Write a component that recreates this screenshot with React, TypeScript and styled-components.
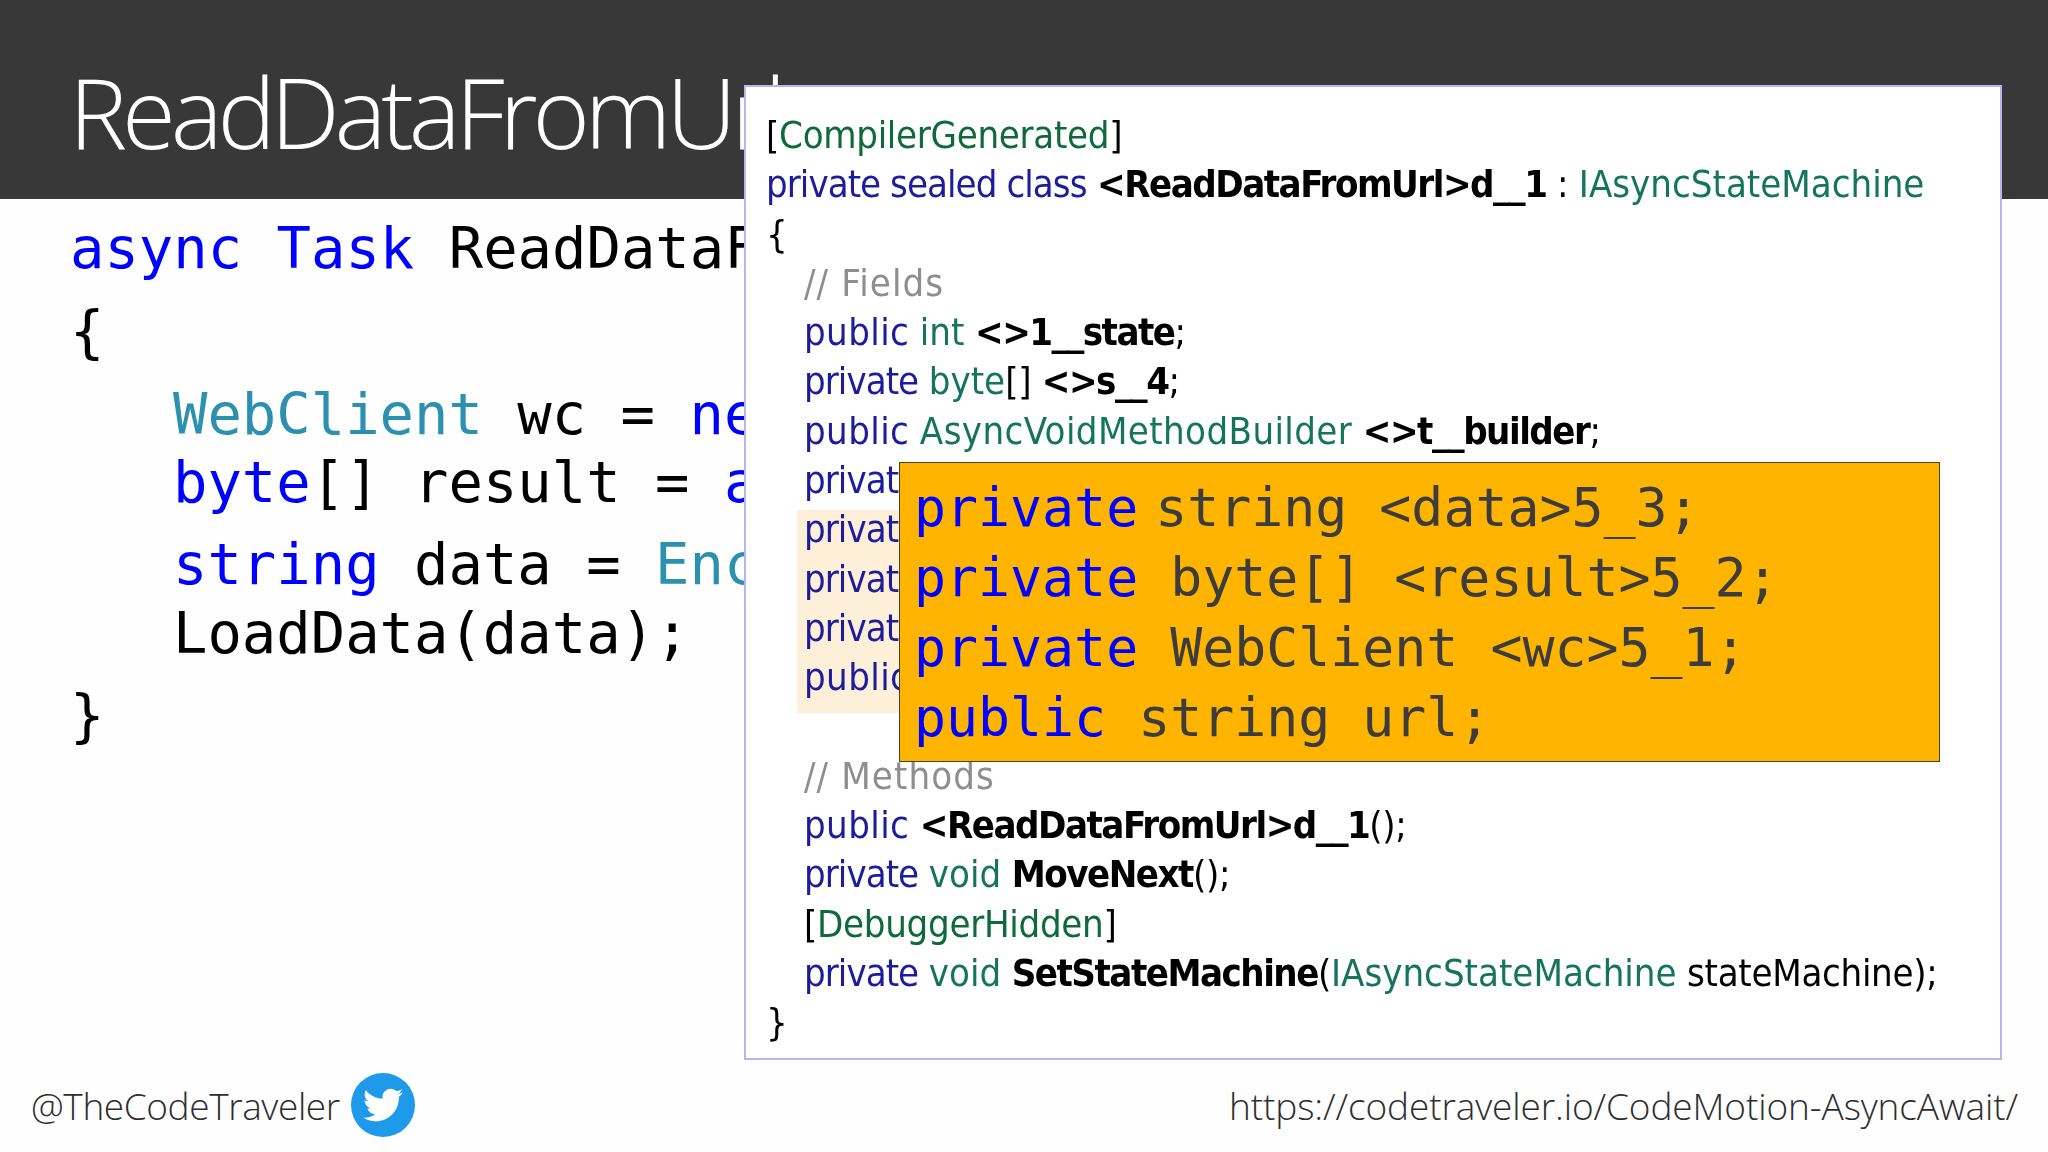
import React from "react";
import styled, { createGlobalStyle } from "styled-components";
import { FaTwitter } from "react-icons/fa";

const Global = createGlobalStyle`
  html, body { margin: 0; padding: 0; background: #fefefe; }
  #root { width: 2048px; height: 1152px; overflow: hidden; }
`;

const Page = styled.div`
  position: relative;
  width: 2048px;
  height: 1152px;
  display: grid;
  grid-template-rows: 199px 1fr 94px;
  background: #fefefe;
  overflow: hidden;
`;
const Header = styled.header`
  background: #383838;
  padding: 51px 0 0 69px;
  box-sizing: border-box;
`;
const Title = styled.h1`
  margin: 0;
  font: 300 98px/120px "Open Sans", sans-serif;
  letter-spacing: -5.2px;
  color: #fff;
`;
const CodeArea = styled.main`
  padding-top: 15px;
  font: 400 57.2px/68px "DejaVu Sans Mono", monospace;
  color: #000;
`;
const CodeLine = styled.div<{ $indent?: boolean; $gap: number }>`
  margin-top: ${(p) => p.$gap}px;
  padding-left: ${(p) => (p.$indent ? 173 : 70)}px;
  white-space: pre;
`;
const Kw = styled.span`color: #0000ff;`;
const Ty = styled.span`color: #2b91af;`;
const Footer = styled.footer`
  display: flex;
  align-items: center;
  justify-content: space-between;
  padding: 2px 30px 0 31px;
  font: 300 37px/50px "Open Sans", sans-serif;
  color: #2e2e2e;
`;
const Handle = styled.div`
  display: flex;
  align-items: center;
  gap: 11px;
  letter-spacing: -0.4px;
`;
const Badge = styled.span`
  width: 64px;
  height: 64px;
  margin-top: -2px;
  border-radius: 50%;
  background: #1f9aea;
  display: flex;
  align-items: center;
  justify-content: center;
  color: #fff;
  font-size: 40px;
`;
const Link = styled.div`
  letter-spacing: -0.12px;
`;
const Panel = styled.section`
  position: absolute;
  left: 744px;
  top: 85px;
  width: 1258px;
  height: 975px;
  box-sizing: border-box;
  padding: 24px 0 0 20px;
  background: #fff;
  border: 2px solid #b9b5ee;
`;
const Listing = styled.div`
  font: 400 38px/49.3px "DejaVu Sans", sans-serif;
  font-stretch: condensed;
  letter-spacing: -0.3px;
  color: #000;
  filter: blur(0.6px);
`;
const Row = styled.div<{ $indent?: boolean }>`
  height: 49.3px;
  padding-left: ${(p) => (p.$indent ? 38 : 0)}px;
  white-space: pre;
`;
const Key = styled.span<{ $wide?: boolean }>`
  color: #1c1c9c;
  letter-spacing: ${(p) => (p.$wide ? 0.4 : -0.95)}px;
`;
const Type = styled.span<{ $wide?: boolean }>`
  color: #15745c;
  letter-spacing: ${(p) => (p.$wide ? 0.4 : 0)}px;
`;
const Attr = styled.span`color: #0e6a3a; letter-spacing: -0.3px;`;
const Comment = styled.span`color: #8e8e8e; letter-spacing: 1.1px;`;
const Name = styled.span`font-weight: 700; letter-spacing: -1.5px;`;
const Highlight = styled.div`
  display: flow-root;
  margin: 5px 0 -10px 31px;
  padding: 0 0 10px 7px;
  background: #fdefd8;
  width: 1000px;
`;
const HighlightRows = styled.div`
  margin-top: -5px;
`;
const Callout = styled.div`
  position: absolute;
  left: 153px;
  top: 375px;
  width: 1041px;
  height: 300px;
  box-sizing: border-box;
  padding: 10px 0 0 14px;
  background: #ffb400;
  border: 1px solid #4a4320;
  font: 400 53.2px/70px "DejaVu Sans Mono", monospace;
  color: #3c3c3c;
`;
const CalloutLine = styled.div`
  white-space: pre;
`;
const TightGap = styled.span`
  word-spacing: -15px;
`;
const Blue = styled.span`color: #0000ff;`;

export default function App() {
  return (
    <Page>
      <Global />
      <Header>
        <Title>ReadDataFromUrl</Title>
      </Header>
      <CodeArea>
        <CodeLine $gap={0}><Kw>async Task</Kw> ReadDataFromUrl(<Kw>string</Kw> url)</CodeLine>
        <CodeLine $gap={15}>{"{"}</CodeLine>
        <CodeLine $gap={15} $indent><Ty>WebClient</Ty> wc = <Kw>new</Kw> <Ty>WebClient</Ty>();</CodeLine>
        <CodeLine $gap={0} $indent><Kw>byte</Kw>[] result = <Kw>await</Kw> wc.DownloadDataTaskAsync(url);</CodeLine>
        <CodeLine $gap={14} $indent><Kw>string</Kw> data = <Ty>Encoding</Ty>.ASCII.GetString(result);</CodeLine>
        <CodeLine $gap={1} $indent>LoadData(data);</CodeLine>
        <CodeLine $gap={14}>{"}"}</CodeLine>
      </CodeArea>
      <Footer>
        <Handle>
          @TheCodeTraveler
          <Badge><FaTwitter /></Badge>
        </Handle>
        <Link>https://codetraveler.io/CodeMotion-AsyncAwait/</Link>
      </Footer>
      <Panel>
        <Listing>
          <Row>[<Attr>CompilerGenerated</Attr>]</Row>
          <Row><Key>private sealed class</Key> <Name>&lt;ReadDataFromUrl&gt;d__1</Name> : <Type>IAsyncStateMachine</Type></Row>
          <Row>{"{"}</Row>
          <Row $indent><Comment>// Fields</Comment></Row>
          <Row $indent><Key $wide>public</Key> <Type>int</Type> <Name>&lt;&gt;1__state</Name>;</Row>
          <Row $indent><Key>private</Key> <Type>byte</Type>[] <Name>&lt;&gt;s__4</Name>;</Row>
          <Row $indent><Key $wide>public</Key> <Type $wide>AsyncVoidMethodBuilder</Type> <Name>&lt;&gt;t__builder</Name>;</Row>
          <Row $indent><Key>private</Key></Row>
          <Highlight>
            <HighlightRows>
              <Row><Key>private</Key></Row>
              <Row><Key>private</Key></Row>
              <Row><Key>private</Key></Row>
              <Row><Key $wide>public</Key></Row>
            </HighlightRows>
          </Highlight>
          <Row />
          <Row $indent><Comment>// Methods</Comment></Row>
          <Row $indent><Key $wide>public</Key> <Name>&lt;ReadDataFromUrl&gt;d__1</Name>();</Row>
          <Row $indent><Key>private</Key> <Type>void</Type> <Name>MoveNext</Name>();</Row>
          <Row $indent>[<Attr>DebuggerHidden</Attr>]</Row>
          <Row $indent><Key>private</Key> <Type>void</Type> <Name>SetStateMachine</Name>(<Type>IAsyncStateMachine</Type> stateMachine);</Row>
          <Row>{"}"}</Row>
        </Listing>
        <Callout>
          <CalloutLine><TightGap><Blue>private</Blue> </TightGap>string &lt;data&gt;5_3;</CalloutLine>
          <CalloutLine><Blue>private</Blue> byte[] &lt;result&gt;5_2;</CalloutLine>
          <CalloutLine><Blue>private</Blue> WebClient &lt;wc&gt;5_1;</CalloutLine>
          <CalloutLine><Blue>public</Blue> string url;</CalloutLine>
        </Callout>
      </Panel>
    </Page>
  );
}
